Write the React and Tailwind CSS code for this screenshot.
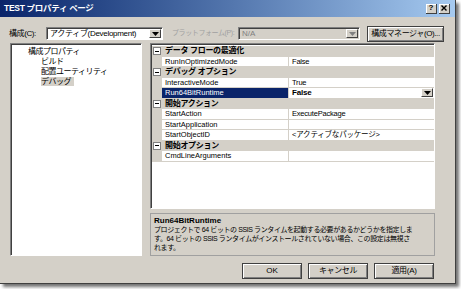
import React from "react";

const font = "font-['Liberation_Sans','Noto_Sans_CJK_JP',sans-serif]";

const rows = [
  { cat: "データ フローの最適化" },
  { name: "RunInOptimizedMode", value: "False" },
  { cat: "デバッグ オプション" },
  { name: "InteractiveMode", value: "True" },
  { name: "Run64BitRuntime", value: "False", selected: true },
  { cat: "開始アクション" },
  { name: "StartAction", value: "ExecutePackage" },
  { name: "StartApplication", value: "" },
  { name: "StartObjectID", value: "<アクティブなパッケージ>" },
  { cat: "開始オプション" },
  { name: "CmdLineArguments", value: "" },
];

const DropArrow = ({ disabled }) => (
  <div className="w-[12px] h-full flex items-center justify-center bg-[#d4d0c8] border-t border-l border-t-white border-l-white border-b border-r border-b-[#404040] border-r-[#404040]">
    <svg width="7" height="4" viewBox="0 0 7 4">
      <path d="M0 0h7L3.5 4z" fill={disabled ? "#808080" : "#000"} />
    </svg>
  </div>
);

const Button = ({ children, className = "" }) => (
  <button
    className={`h-[16px] bg-[#d4d0c8] border border-[#404040] shadow-[inset_1px_1px_0_#fff,inset_-1px_-1px_0_#808080] text-[8px] text-black flex items-center justify-center whitespace-nowrap ${className}`}
  >
    {children}
  </button>
);

const Minus = () => (
  <div className="w-[8px] h-[8px] border border-[#808080] bg-white flex items-center justify-center">
    <div className="w-[4px] h-[1px] bg-black" />
  </div>
);

const App = () => {
  return (
    <div className={`w-[461px] h-[289px] bg-white ${font}`}>
      <div className="w-[456px] h-[284px] bg-[#d4d0c8] flex flex-col border-r border-b border-r-[#404040] border-b-[#404040] shadow-[3px_3px_3px_rgba(0,0,0,0.55)]">
        {/* title bar */}
        <div className="h-[17px] flex items-center justify-between px-[4px] bg-gradient-to-r from-[#0a246a] to-[#a6caf0]">
          <p className="text-[8.5px] font-bold text-white tracking-[-0.3px]">TEST プロパティ ページ</p>
          <div className="flex gap-[2px] mr-[1px]">
            <div className="w-[11px] h-[10px] bg-[#d4d0c8] border-r border-b border-[#404040] shadow-[inset_1px_1px_0_#fff] flex items-center justify-center text-[8px] font-bold leading-none">
              ?
            </div>
            <div className="w-[11px] h-[10px] bg-[#d4d0c8] border-r border-b border-[#404040] shadow-[inset_1px_1px_0_#fff] flex items-center justify-center">
              <svg width="6" height="6" viewBox="0 0 6 6">
                <path d="M0.5 0.5l5 5M5.5 0.5l-5 5" stroke="#000" strokeWidth="1.4" />
              </svg>
            </div>
          </div>
        </div>

        {/* config row */}
        <div className="flex items-center mt-[9px] pl-[9px] h-[15px] whitespace-nowrap">
          <p className="text-[8px] w-[37px] tracking-[-0.4px]">構成(C):</p>
          <div className="w-[117px] h-[13px] bg-white border-t border-l border-[#808080] border-b border-r border-b-white border-r-white shadow-[inset_1px_1px_0_#404040] flex items-center justify-between pl-[3px] pr-[1px] py-[1px]">
            <span className="text-[8px] tracking-[-0.3px]">アクティブ(Development)</span>
            <DropArrow />
          </div>
          <p className="text-[7px] text-[#a0a0a0] ml-[9px] w-[66px] tracking-[-0.4px]">プラットフォーム(P):</p>
          <div className="w-[122px] h-[13px] bg-[#d4d0c8] border-t border-l border-[#808080] border-b border-r border-b-white border-r-white shadow-[inset_1px_1px_0_#404040] flex items-center justify-between pl-[3px] pr-[1px] py-[1px]">
            <span className="text-[8px] text-[#808080]">N/A</span>
            <DropArrow disabled />
          </div>
          <Button className="w-[77px] ml-[7px] h-[15px] tracking-[-0.4px]">構成マネージャ(O)...</Button>
        </div>

        {/* main area */}
        <div className="flex mt-[2px] pl-[10px] gap-[8px]">
          {/* tree */}
          <div className="w-[132px] h-[213px] bg-white border-t border-l border-[#808080] border-b border-r border-b-white border-r-white shadow-[inset_1px_1px_0_#404040] pt-[3px] flex flex-col text-[8px] leading-[10px] tracking-[-0.5px]">
            <p className="pl-[17px]">構成プロパティ</p>
            <p className="pl-[30px]">ビルド</p>
            <p className="pl-[30px]">配置ユーティリティ</p>
            <p className="pl-[30px]">
              <span className="bg-[#d4d0c8] pr-[3px]">デバッグ</span>
            </p>
          </div>

          {/* property grid + description */}
          <div className="w-[285px] flex flex-col gap-[4px]">
            <div className="h-[166px] bg-white border-t border-l border-[#808080] border-b border-r border-b-white border-r-white shadow-[inset_1px_1px_0_#404040] pt-[2px] pl-[1px] flex flex-col">
              {rows.map((r, i) =>
                r.cat ? (
                  <div key={i} className="h-[10.5px] flex items-center bg-[#d4d0c8]">
                    <div className="w-[10px] flex justify-center">
                      <Minus />
                    </div>
                    <p className="pl-[3px] text-[8px] font-bold tracking-[-0.3px] leading-none">{r.cat}</p>
                  </div>
                ) : (
                  <div key={i} className="h-[10.5px] flex">
                    <div className="w-[10px] bg-[#d4d0c8]" />
                    <div
                      className={`w-[127px] border-b border-r border-[#d4d0c8] flex items-center pl-[3px] text-[7.5px] leading-none ${
                        r.selected ? "bg-[#0a246a] text-white" : "bg-white"
                      }`}
                    >
                      {r.name}
                    </div>
                    <div className="flex-1 border-b border-[#d4d0c8] flex items-center justify-between pl-[3px] bg-white text-[7.5px] leading-none tracking-[-0.2px]">
                      <span className={r.selected ? "font-bold text-[8px]" : ""}>{r.value}</span>
                      {r.selected && (
                        <div className="h-[9px] mr-[1px]">
                          <DropArrow />
                        </div>
                      )}
                    </div>
                  </div>
                )
              )}
            </div>
            <div className="h-[43px] border border-[#a0a0a0] px-[3px] pt-[2px] flex flex-col text-[7px] leading-[9px] tracking-[-0.4px] whitespace-nowrap overflow-hidden">
              <p className="font-bold text-[8px] tracking-[0px]">Run64BitRuntime</p>
              <p>プロジェクトで 64 ビットの SSIS ランタイムを起動する必要があるかどうかを指定しま</p>
              <p>す。64 ビットの SSIS ランタイムがインストールされていない場合、この設定は無視さ</p>
              <p>れます。</p>
            </div>
          </div>
        </div>

        {/* buttons */}
        <div className="flex justify-end gap-[6px] mt-[7px] pr-[21px]">
          <Button className="w-[60px]">OK</Button>
          <Button className="w-[60px] tracking-[-0.4px]">キャンセル</Button>
          <Button className="w-[60px] tracking-[-0.3px]">適用(A)</Button>
        </div>
      </div>
    </div>
  );
};

export default App;
